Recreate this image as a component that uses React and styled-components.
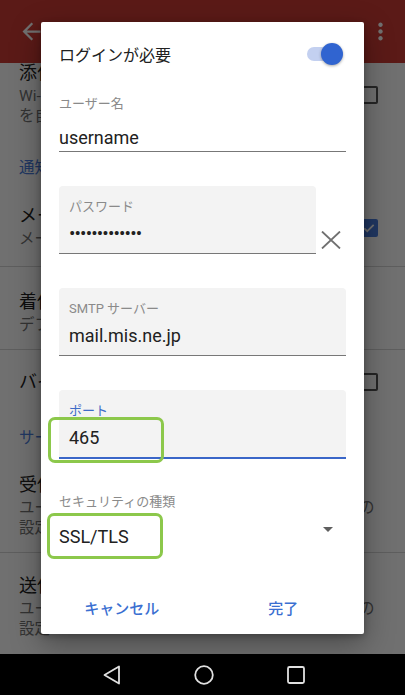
import React from 'react'
import styled, { createGlobalStyle } from 'styled-components'
import { MdArrowBack, MdMoreVert } from 'react-icons/md'

const GlobalStyle = createGlobalStyle`
  html, body {
    margin: 0;
    padding: 0;
    background: #000;
  }
  body {
    font-family: Roboto, "Noto Sans CJK JP", sans-serif;
  }
`

const Page = styled.div`
  width: 405px;
  height: 695px;
  display: flex;
  flex-direction: column;
  overflow: hidden;
`

const Screen = styled.div`
  position: relative;
  height: 654px;
  display: flex;
  flex-direction: column;
  background: #fff;
  overflow: hidden;
`

const AppBar = styled.div`
  height: 63px;
  flex-shrink: 0;
  background: #cf3d35;
  color: #fff;
  display: flex;
  align-items: center;
  justify-content: space-between;
  padding: 0 11px 0 18px;
`

const List = styled.div`
  flex: 1;
  display: flex;
  flex-direction: column;
`

const Item = styled.div`
  display: flex;
  align-items: center;
  padding: ${p => p.$top || 0}px 27px ${p => p.$bottom || 0}px 19px;
  border-bottom: ${p => (p.$divider ? '1px solid #d6d6d6' : 'none')};
`

const ItemText = styled.div`
  flex: 1;
`

const ItemTitle = styled.div`
  font-size: 18px;
  line-height: 20px;
  color: #212121;
`

const ItemDesc = styled.div`
  margin-top: 3px;
  font-size: 15.5px;
  line-height: 20px;
  color: #757575;
  white-space: pre-line;
`

const SectionHeader = styled.div`
  padding: 0 19px ${p => p.$bottom}px;
  font-size: 15.5px;
  line-height: 20px;
  color: #4a7ee0;
`

const Checkbox = styled.div`
  width: 18px;
  height: 18px;
  box-sizing: border-box;
  border-radius: 2px;
  border: 2px solid ${p => (p.$checked ? '#4a7ee0' : '#555')};
  background: ${p => (p.$checked ? '#4a7ee0' : 'transparent')};
  display: flex;
  align-items: center;
  justify-content: center;
`

const Scrim = styled.div`
  position: absolute;
  inset: 0;
  background: rgba(0, 0, 0, 0.56);
`

const Dialog = styled.div`
  position: absolute;
  top: 22px;
  left: 41px;
  width: 323px;
  height: 612px;
  background: #fff;
  border-radius: 2px;
  box-shadow: 0 10px 30px rgba(0, 0, 0, 0.35), 0 2px 6px rgba(0, 0, 0, 0.25);
  display: flex;
  flex-direction: column;
`

const Body = styled.div`
  flex: 1;
  padding: 0 18px;
`

const TitleRow = styled.div`
  height: 64px;
  display: flex;
  align-items: center;
  justify-content: space-between;
  font-size: 16px;
  color: #212121;
`

const Switch = styled.div`
  position: relative;
  width: 36px;
  height: 22px;
  margin-right: 3px;
`

const Track = styled.div`
  position: absolute;
  left: 0;
  top: 4px;
  width: 34px;
  height: 14px;
  border-radius: 7px;
  background: #c3d0f0;
`

const Thumb = styled.div`
  position: absolute;
  right: 0;
  top: 0;
  width: 22px;
  height: 22px;
  border-radius: 50%;
  background: #3064d0;
  box-shadow: 0 1px 3px rgba(0, 0, 0, 0.35);
`

const PlainField = styled.div`
  position: relative;
  margin-top: ${p => p.$top}px;
`

const FilledField = styled.div`
  position: relative;
  flex: 1;
  margin-top: ${p => p.$top || 0}px;
  padding: 12px 10px 7px;
  background: #f3f3f3;
  border-radius: 4px 4px 0 0;
  border-bottom: ${p => (p.$focused ? '2px solid #3a66c8' : '1px solid #777')};
`

const Label = styled.div`
  font-size: 13px;
  line-height: 18px;
  color: ${p => (p.$active ? '#3e6cc8' : '#8a8a8a')};
`

const Value = styled.div`
  margin-top: ${p => p.$gap}px;
  font-size: 18px;
  line-height: 24px;
  color: #212121;
  ${p => p.$underline && `
    padding-bottom: 1px;
    border-bottom: 1px solid #777;
  `}
`

const Dots = styled(Value)`
  font-size: 19px;
  letter-spacing: -0.85px;
`

const FieldRow = styled.div`
  display: flex;
  align-items: flex-end;
  margin-top: 34px;
`

const ClearButton = styled.div`
  width: 30px;
  height: 18px;
  margin-bottom: 5px;
  display: flex;
  justify-content: center;
`

const SpinnerRow = styled.div`
  margin-top: 14px;
  display: flex;
  justify-content: space-between;
`

const DropArrow = styled.div`
  margin: 2px 13px 0 0;
  width: 0;
  height: 0;
  border-left: 5px solid transparent;
  border-right: 5px solid transparent;
  border-top: 5px solid #5f5f5f;
`

const Highlight = styled.div`
  position: absolute;
  left: ${p => p.$left}px;
  top: ${p => p.$top}px;
  width: 116px;
  height: 46px;
  box-sizing: border-box;
  border: 3px solid #8cc84b;
  border-radius: 7px;
`

const Actions = styled.div`
  height: 54px;
  display: flex;
`

const ActionButton = styled.div`
  flex: 1;
  display: flex;
  align-items: center;
  justify-content: center;
  font-size: 15px;
  font-weight: 500;
  color: #3b6fd1;
`

const NavBar = styled.div`
  flex: 1;
  background: #000;
  display: flex;
  align-items: center;
  justify-content: center;
  gap: 72px;
  padding-left: 2px;
`

const NavIcon = styled.svg`
  width: 20px;
  height: 20px;
  fill: none;
  stroke: #e0e0e0;
  stroke-width: 1.8;
`

const App = () => {
  return (
    <Page>
      <GlobalStyle />
      <Screen>
        <AppBar>
          <MdArrowBack size={27} />
          <MdMoreVert size={27} />
        </AppBar>
        <List inert>
          <Item $bottom={32}>
            <ItemText>
              <ItemTitle>添付ファイルをダウンロード</ItemTitle>
              <ItemDesc>{'Wi-Fi経由で最近のメールの添付ファイル\nを自動的にダウンロード'}</ItemDesc>
            </ItemText>
            <Checkbox />
          </Item>
          <SectionHeader $bottom={28}>通知設定</SectionHeader>
          <Item $bottom={17} $divider>
            <ItemText>
              <ItemTitle>メール通知</ItemTitle>
              <ItemDesc>メール受信時にステータスバーで通知</ItemDesc>
            </ItemText>
            <Checkbox $checked>
              <svg width="14" height="14" viewBox="0 0 24 24">
                <path d="M4 12.5l5 5L20 6.5" fill="none" stroke="#fff" strokeWidth="3" />
              </svg>
            </Checkbox>
          </Item>
          <Item $top={25} $bottom={14} $divider>
            <ItemText>
              <ItemTitle>着信音を選択</ItemTitle>
              <ItemDesc>デフォルト（通知音）</ItemDesc>
            </ItemText>
          </Item>
          <Item $top={22} $bottom={36}>
            <ItemText>
              <ItemTitle>バイブレーション</ItemTitle>
            </ItemText>
            <Checkbox />
          </Item>
          <SectionHeader $bottom={27}>サーバー設定</SectionHeader>
          <Item $bottom={14} $divider>
            <ItemText>
              <ItemTitle>受信設定</ItemTitle>
              <ItemDesc>{'ユーザー名、パスワード、その他の受信サーバーの\n設定'}</ItemDesc>
            </ItemText>
          </Item>
          <Item $top={23}>
            <ItemText>
              <ItemTitle>送信設定</ItemTitle>
              <ItemDesc>{'ユーザー名、パスワード、その他の送信サーバーの\n設定'}</ItemDesc>
            </ItemText>
          </Item>
        </List>
        <Scrim />
        <Dialog>
          <Body>
            <TitleRow>
              ログインが必要
              <Switch>
                <Track />
                <Thumb />
              </Switch>
            </TitleRow>
            <PlainField $top={9}>
              <Label>ユーザー名</Label>
              <Value $gap={13} $underline>username</Value>
            </PlainField>
            <FieldRow>
              <FilledField>
                <Label>パスワード</Label>
                <Dots $gap={6}>•••••••••••••</Dots>
              </FilledField>
              <ClearButton>
                <svg width="20" height="18" viewBox="0 0 20 18">
                  <path d="M1 0.5L19 17.5M19 0.5L1 17.5" stroke="#707070" strokeWidth="1.8" />
                </svg>
              </ClearButton>
            </FieldRow>
            <FilledField $top={34}>
              <Label>SMTP サーバー</Label>
              <Value $gap={6}>mail.mis.ne.jp</Value>
            </FilledField>
            <FilledField $top={34} $focused>
              <Label $active>ポート</Label>
              <Value $gap={6}>465</Value>
              <Highlight $left={-11} $top={27} />
            </FilledField>
            <PlainField $top={34}>
              <Label>セキュリティの種類</Label>
              <SpinnerRow>
                <Value $gap={0}>SSL/TLS</Value>
                <DropArrow />
              </SpinnerRow>
              <Highlight $left={-12} $top={20} />
            </PlainField>
          </Body>
          <Actions>
            <ActionButton>キャンセル</ActionButton>
            <ActionButton>完了</ActionButton>
          </Actions>
        </Dialog>
      </Screen>
      <NavBar>
        <NavIcon viewBox="0 0 20 20">
          <path d="M17 1.5V18.5L2.5 10Z" strokeLinejoin="round" />
        </NavIcon>
        <NavIcon viewBox="0 0 20 20">
          <circle cx="10" cy="10" r="8.8" />
        </NavIcon>
        <NavIcon viewBox="0 0 20 20">
          <rect x="2" y="2" width="16" height="16" rx="1.5" />
        </NavIcon>
      </NavBar>
    </Page>
  )
}

export default App
